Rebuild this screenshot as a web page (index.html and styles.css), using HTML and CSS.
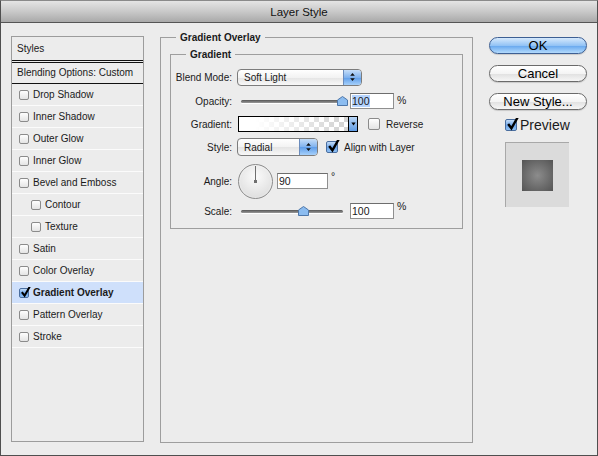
FILE: index.html
```html
<!DOCTYPE html>
<html lang="en">
<head>
    <meta charset="UTF-8">
    <title>Layer Style</title>
    <link rel="stylesheet" href="styles.css">
</head>
<body>
    <div class="window">
        <div class="titlebar">Layer Style</div>
        <div class="content">
            <div class="styles-list">
                <div class="list-head">Styles</div>
                <div class="list-blend">Blending Options: Custom</div>
                <div class="item"><span class="check small"></span>Drop Shadow</div>
                <div class="item"><span class="check small"></span>Inner Shadow</div>
                <div class="item"><span class="check small"></span>Outer Glow</div>
                <div class="item"><span class="check small"></span>Inner Glow</div>
                <div class="item"><span class="check small"></span>Bevel and Emboss</div>
                <div class="item sub"><span class="check small"></span>Contour</div>
                <div class="item sub"><span class="check small"></span>Texture</div>
                <div class="item"><span class="check small"></span>Satin</div>
                <div class="item"><span class="check small"></span>Color Overlay</div>
                <div class="item selected"><span class="check small on"><svg viewBox="0 0 12 12"><path d="M2 5.5 L5 9.5 L11 -1" /></svg></span>Gradient Overlay</div>
                <div class="item"><span class="check small"></span>Pattern Overlay</div>
                <div class="item"><span class="check small"></span>Stroke</div>
            </div>

            <fieldset class="group outer">
                <legend>Gradient Overlay</legend>
                <fieldset class="group inner">
                    <legend>Gradient</legend>

                    <div class="row row-blend">
                        <span class="label">Blend Mode:</span>
                        <div class="select blend-select">
                            <span class="select-text">Soft Light</span>
                            <span class="arrows"><svg viewBox="0 0 9 12"><path d="M4.5 1 L7.5 4.5 H1.5 Z M4.5 11 L7.5 7.5 H1.5 Z" /></svg></span>
                        </div>
                    </div>

                    <div class="row row-opacity">
                        <span class="label">Opacity:</span>
                        <div class="slider">
                            <div class="track"></div>
                            <svg class="thumb" style="left: 96px" viewBox="0 0 11 10"><path d="M5.5 0.5 L10.5 4 V9.5 H0.5 V4 Z" /></svg>
                        </div>
                        <div class="field num"><span class="selection">100</span></div>
                        <span class="unit">%</span>
                    </div>

                    <div class="row row-gradient">
                        <span class="label">Gradient:</span>
                        <div class="swatch"></div>
                        <div class="drop"><svg viewBox="0 0 7 5"><path d="M0.5 0.5 H6.5 L3.5 4.5 Z" /></svg></div>
                        <span class="check"></span>
                        <span class="check-label">Reverse</span>
                    </div>

                    <div class="row row-style">
                        <span class="label">Style:</span>
                        <div class="select style-select">
                            <span class="select-text">Radial</span>
                            <span class="arrows"><svg viewBox="0 0 9 12"><path d="M4.5 1 L7.5 4.5 H1.5 Z M4.5 11 L7.5 7.5 H1.5 Z" /></svg></span>
                        </div>
                        <span class="check on"><svg viewBox="0 0 12 12"><path d="M2 5.5 L5 9.5 L11 -1" /></svg></span>
                        <span class="check-label">Align with Layer</span>
                    </div>

                    <div class="row row-angle">
                        <span class="label">Angle:</span>
                        <div class="dial"><span class="dial-hand"></span><span class="dial-dot"></span></div>
                        <div class="field angle">90</div>
                        <span class="unit deg">°</span>
                    </div>

                    <div class="row row-scale">
                        <span class="label">Scale:</span>
                        <div class="slider">
                            <div class="track"></div>
                            <svg class="thumb" style="left: 57px" viewBox="0 0 11 10"><path d="M5.5 0.5 L10.5 4 V9.5 H0.5 V4 Z" /></svg>
                        </div>
                        <div class="field num">100</div>
                        <span class="unit">%</span>
                    </div>
                </fieldset>
            </fieldset>

            <div class="side">
                <button class="btn primary">OK</button>
                <button class="btn">Cancel</button>
                <button class="btn">New Style...</button>
                <div class="preview-toggle">
                    <span class="check on"><svg viewBox="0 0 12 12"><path d="M2 5.5 L5 9.5 L11 -1" /></svg></span>
                    <span>Preview</span>
                </div>
                <div class="preview">
                    <div class="preview-square"></div>
                </div>
            </div>
        </div>
    </div>
</body>
</html>
```

FILE: styles.css
```css
body {
    margin: 0;
    font-family: "Liberation Sans", Arial, sans-serif;
    font-size: 10px;
    color: #1a1a1a;
    background-color: #ececec;
    overflow: hidden;
}

.window {
    width: 598px;
    height: 456px;
    box-sizing: border-box;
    border: 1px solid #4f4f4f;
    border-top-color: #8a8a8a;
    background-color: #ececec;
}

.titlebar {
    height: 21px;
    line-height: 22px;
    text-align: center;
    font-size: 11.5px;
    color: #111;
    background: linear-gradient(#e4e4e4, #c9c9c9 50%, #a9a9a9);
    border-bottom: 1px solid #555;
}

.content {
    display: flex;
    align-items: flex-start;
}

/* left list */
.styles-list {
    margin: 13px 0 0 10px;
    width: 133px;
    height: 406px;
    box-sizing: border-box;
    border: 1px solid #9c9c9c;
    display: flex;
    flex-direction: column;
}

.list-head {
    height: 23px;
    line-height: 23px;
    padding-left: 5px;
    border-bottom: 1px solid #111;
}

.list-blend {
    height: 20px;
    line-height: 20px;
    padding-left: 5px;
    border-top: 1px solid #111;
    margin-top: 1px;
    border-bottom: 1px solid #111;
}

.item {
    height: 21px;
    border-bottom: 1px solid #fbfbfb;
    display: flex;
    align-items: center;
    padding-left: 7px;
}

.item.sub {
    padding-left: 19px;
}

.item.selected {
    background-color: #cfe0fb;
    font-weight: bold;
    border-bottom-color: #fbfbfb;
}

.check {
    width: 10px;
    height: 10px;
    border: 1px solid #8b8b8b;
    border-radius: 2px;
    background: linear-gradient(#fefefe, #e4e4e4);
    position: relative;
    flex-shrink: 0;
}

.check.small {
    width: 8px;
    height: 8px;
    margin-right: 4px;
}

.check.on {
    border-color: #4a6e9f;
    background: linear-gradient(#c3dcf8, #6ea6ea 55%, #8fc0f4);
}

.check svg {
    position: absolute;
    left: 0;
    top: -2px;
    width: 13px;
    height: 13px;
    fill: none;
    stroke: #000;
    stroke-width: 2.2;
}

.check.small svg {
    width: 11px;
    height: 11px;
    top: -2px;
}

/* fieldsets */
.group {
    margin: 0;
    border: 1px solid #9e9e9e;
    min-width: 0;
}

.group legend {
    font-weight: bold;
    line-height: 13px;
    padding: 0 4px;
}

.outer {
    margin: 8px 0 0 16px;
    width: 313px;
    height: 412px;
    box-sizing: border-box;
    padding: 0 9px;
}

.outer > legend {
    margin-left: 6px;
}

.inner {
    margin-top: 4px;
    padding: 3px 0 10px 0;
}

.inner > legend {
    margin-left: 15px;
}

.row {
    display: flex;
    align-items: center;
}

.row .label {
    width: 61px;
    text-align: right;
    margin-right: 5px;
    flex-shrink: 0;
}

.row-blend { height: 26px; }
.row-opacity { height: 22px; }
.row-gradient { height: 24px; }
.row-style { height: 22px; }
.row-angle { height: 46px; }
.row-scale { height: 14px; }

/* popup menus */
.select {
    height: 15px;
    box-sizing: content-box;
    border: 1px solid #7c7c7c;
    border-radius: 4px;
    background: linear-gradient(#ffffff, #f3f3f3 50%, #e4e4e4 51%, #f8f8f8);
    display: flex;
    align-items: center;
    overflow: hidden;
}

.blend-select {
    width: 123px;
}

.style-select {
    width: 79px;
    height: 16px;
    margin-right: 8px;
}

.select-text {
    flex: 1;
    padding-left: 6px;
}

.arrows {
    width: 17px;
    height: 100%;
    border-left: 1px solid #6b8cbc;
    background: linear-gradient(#c6def8, #7fb2ee 50%, #5e9de9 51%, #a6d0fa);
    display: flex;
    justify-content: center;
    align-items: center;
}

.arrows svg {
    width: 7px;
    height: 10px;
    fill: #111;
}

/* sliders */
.slider {
    width: 102px;
    height: 10px;
    margin-left: 4px;
    margin-right: 7px;
    position: relative;
}

.track {
    position: absolute;
    left: 0;
    right: 0;
    top: 4px;
    height: 3px;
    border-radius: 2px;
    background: linear-gradient(#555, #9a9a9a);
    box-shadow: 0 1px 0 #fff;
}

.thumb {
    position: absolute;
    top: 0;
    width: 11px;
    height: 10px;
    fill: #8bbcf0;
    stroke: #4d76a8;
    stroke-width: 1;
}

/* text fields */
.field {
    height: 14px;
    line-height: 14px;
    border: 1px solid #8f8f8f;
    border-top-color: #6d6d6d;
    background-color: #fff;
    padding-left: 1px;
    font-size: 10.5px;
}

.field.num {
    width: 41px;
}

.field.angle {
    width: 48px;
    margin-left: 4px;
}

.selection {
    background-color: #b5d4fe;
}

.unit {
    margin-left: 3px;
    align-self: flex-start;
    margin-top: 4px;
    font-size: 10.5px;
}

.row-scale .unit {
    margin-top: -4px;
}

.deg {
    margin-top: 12px;
}

/* gradient swatch */
.swatch {
    width: 109px;
    height: 14px;
    margin-left: 1px;
    border: 1px solid #000;
    background:
        linear-gradient(to right, #fff 15%, rgba(255, 255, 255, 0) 95%),
        repeating-conic-gradient(#d4d4d4 0 25%, #fff 0 50%) 0 0 / 10px 10px;
}

.drop {
    width: 8px;
    height: 14px;
    border: 1px solid #000;
    border-left: none;
    background: linear-gradient(#b9d6f6, #5e9be4);
    display: flex;
    justify-content: center;
    align-items: center;
    margin-right: 10px;
}

.drop svg {
    width: 5px;
    height: 4px;
    fill: #000;
}

.check-label {
    margin-left: 6px;
}

/* angle dial */
.dial {
    width: 33px;
    height: 33px;
    border: 1px solid #8b8b8b;
    border-radius: 50%;
    background: radial-gradient(circle at 50% 35%, #fbfbfb, #e2e2e2 70%, #d0d0d0);
    box-shadow: inset 0 0 2px #fff;
    position: relative;
    margin-left: 1px;
}

.dial-hand {
    position: absolute;
    left: 16px;
    top: 1px;
    width: 1px;
    height: 16px;
    background-color: #6f6f6f;
}

.dial-dot {
    position: absolute;
    left: 15px;
    top: 15px;
    width: 3px;
    height: 3px;
    background-color: #6f6f6f;
}

/* right column */
.side {
    margin: 14px 0 0 16px;
    width: 98px;
    display: flex;
    flex-direction: column;
}

.btn {
    height: 17px;
    margin: 0 0 11px 0;
    padding: 0;
    border: 1px solid #6a6a6a;
    border-radius: 9px;
    background: linear-gradient(#ffffff, #f4f4f4 50%, #e0e0e0 51%, #f6f6f6);
    font-family: "Liberation Sans", Arial, sans-serif;
    font-size: 13px;
    line-height: 15px;
    color: #000;
    box-shadow: 0 1px 1px rgba(0, 0, 0, 0.15);
}

.btn.primary {
    border-color: #3d5f93;
    background: linear-gradient(#d6e9fc, #93c3f5 50%, #64a6ee 51%, #b3dafc);
}

.preview-toggle {
    margin: -3px 0 0 16px;
    display: flex;
    align-items: center;
    font-size: 14px;
    height: 14px;
}

.preview-toggle .check {
    margin-right: 3px;
}

.preview {
    margin: 10px 0 0 16px;
    width: 63px;
    height: 64px;
    border-top: 1px solid #a8a8a8;
    border-left: 1px solid #a8a8a8;
    background-color: #dbdbdb;
    display: flex;
    justify-content: center;
    align-items: center;
}

.preview-square {
    width: 31px;
    height: 31px;
    background: radial-gradient(circle, #8c8c8c, #6a6a6a 60%, #545454);
}
```
